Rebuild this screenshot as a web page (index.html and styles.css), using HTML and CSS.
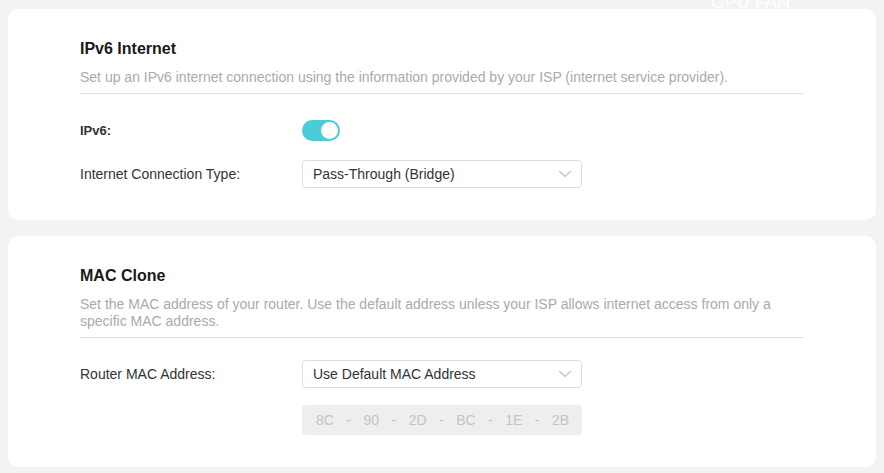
FILE: index.html
```html
<!DOCTYPE html>
<html lang="en">
<head>
    <meta charset="UTF-8">
    <meta name="viewport" content="width=device-width, initial-scale=1.0">
    <title>Internet</title>
    <link rel="stylesheet" href="styles.css">
</head>
<body>

<div class="fan-label">GPU FAN</div>

<div class="card">
    <h2 class="card-title">IPv6 Internet</h2>
    <p class="card-desc">Set up an IPv6 internet connection using the information provided by your ISP (internet service provider).</p>

    <div class="form">
        <div class="row">
            <label class="label bold">IPv6:</label>
            <div class="toggle on"><span class="knob"></span></div>
        </div>
        <div class="row">
            <label class="label">Internet Connection Type:</label>
            <div class="select">
                <span>Pass-Through (Bridge)</span>
                <svg class="chevron" width="14" height="8" viewBox="0 0 14 8"><path d="M1 1l6 5.5L13 1" fill="none" stroke="#c8c8c8" stroke-width="1.4"/></svg>
            </div>
        </div>
    </div>
</div>

<div class="card">
    <h2 class="card-title">MAC Clone</h2>
    <p class="card-desc">Set the MAC address of your router. Use the default address unless your ISP allows internet access from only a specific MAC address.</p>

    <div class="form">
        <div class="row">
            <label class="label">Router MAC Address:</label>
            <div class="select">
                <span>Use Default MAC Address</span>
                <svg class="chevron" width="14" height="8" viewBox="0 0 14 8"><path d="M1 1l6 5.5L13 1" fill="none" stroke="#c8c8c8" stroke-width="1.4"/></svg>
            </div>
        </div>
        <div class="row mac-row">
            <span class="label"></span>
            <div class="mac disabled">
                <span>8C</span><span>-</span>
                <span>90</span><span>-</span>
                <span>2D</span><span>-</span>
                <span>BC</span><span>-</span>
                <span>1E</span><span>-</span>
                <span>2B</span>
            </div>
        </div>
    </div>
</div>

</body>
</html>
```

FILE: styles.css
```css
body {
    margin: 0;
    padding: 9px 8px;
    background-color: #f3f3f3;
    font-family: "Liberation Sans", Arial, sans-serif;
    color: #333;
}
.fan-label {
    position: absolute;
    top: -8px;
    left: 711px;
    font-size: 18px;
    color: #fff;
}
.card {
    background-color: #fff;
    border-radius: 10px;
    padding: 30px 72px 32px;
    margin-bottom: 16px;
}
.card-title {
    margin: 0 0 10px;
    font-size: 16px;
    line-height: 20px;
    font-weight: bold;
    color: #1a1a1a;
}
.card-desc {
    margin: 0;
    padding-bottom: 7px;
    font-size: 14px;
    line-height: 17px;
    color: #aaa;
    border-bottom: 1px solid #e2e2e2;
}
.form {
    display: flex;
    flex-direction: column;
    gap: 16px;
    margin-top: 22px;
}
.row {
    display: flex;
    align-items: center;
    height: 28px;
}
.label {
    width: 222px;
    font-size: 14px;
    color: #333;
}
.label.bold {
    font-weight: bold;
    font-size: 13px;
}
.toggle {
    width: 38px;
    height: 21px;
    border-radius: 11px;
    background-color: #ccc;
    display: flex;
    align-items: center;
    padding: 0 2px;
    box-sizing: border-box;
}
.toggle.on {
    background-color: #4accd7;
    justify-content: flex-end;
}
.knob {
    width: 17px;
    height: 17px;
    border-radius: 50%;
    background-color: #fff;
}
.select {
    width: 280px;
    height: 28px;
    box-sizing: border-box;
    border: 1px solid #ddd;
    border-radius: 4px;
    display: flex;
    align-items: center;
    justify-content: space-between;
    padding: 0 9px 0 10px;
    font-size: 14px;
    color: #333;
}
.mac-row {
    margin-top: 1px;
    height: 30px;
}
.mac {
    width: 280px;
    height: 30px;
    box-sizing: border-box;
    border-radius: 4px;
    background-color: #eee;
    display: flex;
    align-items: center;
    justify-content: space-between;
    padding: 0 13px 0 14px;
    font-size: 14px;
    color: #c4c4c4;
}
```
